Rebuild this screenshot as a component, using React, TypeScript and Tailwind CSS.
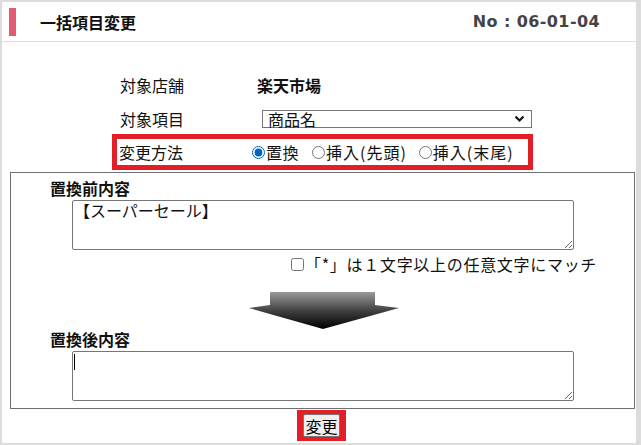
const jp = "font-['Noto_Sans_CJK_JP',sans-serif]";

const Arrow = () => (
  <svg width="152" height="38" viewBox="0 0 152 38" className="block">
    <defs>
      <linearGradient id="arrowFill" x1="0" y1="0" x2="0" y2="1">
        <stop offset="0" stopColor="#9a9a9a" />
        <stop offset="0.55" stopColor="#3a3a3a" />
        <stop offset="1" stopColor="#000000" />
      </linearGradient>
    </defs>
    <path d="M21 0 H126 V13 L150 16 L74 37 L0 16 L21 13 Z" fill="url(#arrowFill)" />
  </svg>
);

const App = () => {
  return (
    <div className={`w-[641px] h-[445px] bg-[#dcdcdc] pt-[2px] pl-[2px] pr-[5px] pb-[2px] ${jp} text-[#111]`}>
      <div className="bg-white h-full flex flex-col">
        {/* header */}
        <div className="h-[40px] border-b border-[#dedede] flex items-center shrink-0">
          <div className="ml-[7px] w-[7px] h-[28px] bg-[#e35b72]" />
          <div className="ml-[24px] text-[16px] font-bold leading-none">一括項目変更</div>
          <div className="ml-auto mr-[36px] text-[16px] font-bold tracking-[0.4px] text-[#444] font-['DejaVu_Sans',sans-serif] leading-none">
            No : 06-01-04
          </div>
        </div>

        {/* form rows */}
        <div className="pl-[110px] pt-[28px] text-[16px] leading-[20px]">
          <div className="w-[430px] h-[30px] border-[5px] border-transparent px-[3px] flex items-center">
            <div className="w-[137px]">対象店舗</div>
            <div className="font-bold">楽天市場</div>
          </div>
          <div className="mt-[4px] w-[430px] h-[30px] border-[5px] border-transparent px-[3px] flex items-center">
            <div className="w-[142px] shrink-0">対象項目</div>
            <div className="w-[270px] shrink-0 h-[18px] border border-[#767676] flex items-center pl-[5px] pr-[6px]">
              <span className="leading-[16px]">商品名</span>
              <svg width="11" height="8" viewBox="0 0 11 8" className="ml-auto">
                <polyline points="1.5,1.5 5.5,5.5 9.5,1.5" fill="none" stroke="#111" strokeWidth="2.2" />
              </svg>
            </div>
          </div>
          <div className="w-[421px] h-[36px] border-[5px] border-[#e21f26] px-[2px] flex items-center">
            <div className="w-[133px] shrink-0">変更方法</div>
            <label className="flex items-center">
              <input type="radio" name="method" defaultChecked className="m-0 w-[13px] h-[13px] accent-[#0067c0]" />
              <span className="ml-[1px] tracking-[0.5px]">置換</span>
            </label>
            <label className="flex items-center ml-[13px]">
              <input type="radio" name="method" className="m-0 w-[13px] h-[13px]" />
              <span className="ml-[1px] tracking-[1px]">挿入(先頭)</span>
            </label>
            <label className="flex items-center ml-[12px]">
              <input type="radio" name="method" className="m-0 w-[13px] h-[13px]" />
              <span className="ml-[1px] tracking-[1px]">挿入(末尾)</span>
            </label>
          </div>
        </div>

        {/* replace box */}
        <div className="mt-[2px] ml-[8px] w-[625px] h-[237px] border border-[#707070] text-[16px] leading-[20px]">
          <div className="mt-[5px] pl-[39px] font-bold">置換前内容</div>
          <textarea
            defaultValue="【スーパーセール】"
            className="block mt-[2px] ml-[61px] w-[502px] h-[50px] border border-[#767676] rounded-[2px] px-[1px] py-0 text-[16px] leading-[19px] outline-none"
          />
          <label className="mt-[4px] pl-[280px] h-[20px] flex items-center">
            <input type="checkbox" className="m-0 w-[13px] h-[13px]" />
            <span className="ml-[1px] tracking-[0.7px]">「*」は１文字以上の任意文字にマッチ</span>
          </label>
          <div className="mt-[18px] ml-[238px]">
            <Arrow />
          </div>
          <div className="-mt-[1px] pl-[39px] font-bold">置換後内容</div>
          <div className="relative mt-[2px] ml-[61px] w-[502px] h-[50px]">
            <textarea className="block w-full h-full border border-[#767676] rounded-[2px] px-[1px] py-0 text-[16px] leading-[19px] outline-none" />
            <span className="absolute left-[2px] top-[3px] w-[1px] h-[16px] bg-black" />
          </div>
        </div>

        {/* submit */}
        <div className="mt-[1px] ml-[295px] w-[49px] h-[31px] bg-[#e21f26] flex items-center justify-center">
          <button className="w-[37px] h-[23px] bg-[#efefef] border border-[#767676] rounded-[2px] text-[16px] leading-[20px] text-black flex items-center justify-center">
            変更
          </button>
        </div>
      </div>
    </div>
  );
};

export default App;
